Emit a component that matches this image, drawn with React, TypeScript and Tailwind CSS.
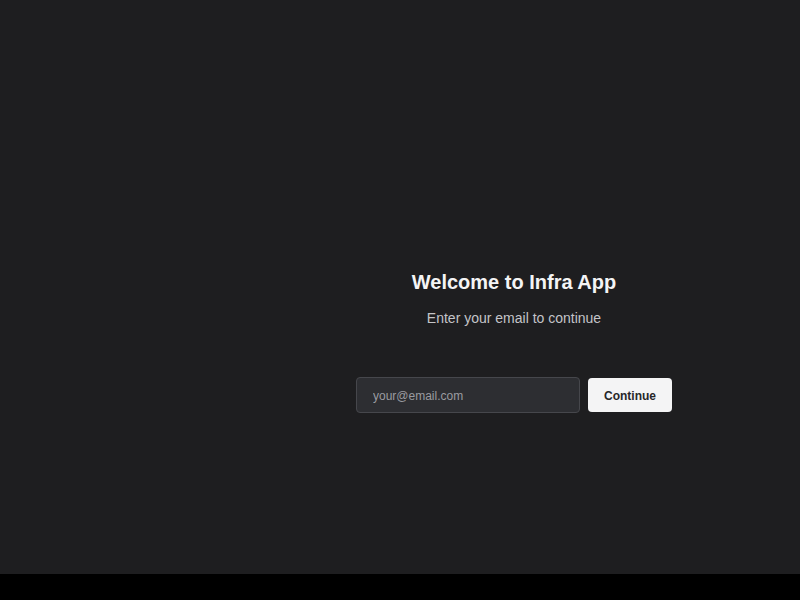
export default function App() {
  return (
    <div className="flex h-[600px] w-[800px] flex-col bg-black font-['Liberation_Sans',Arial,sans-serif]">
      <div className="flex h-[574px] bg-[#1e1e20]">
        <aside className="w-[228px] shrink-0" />
        <main className="flex flex-1 flex-col items-center pt-[270px]">
          <h1 className="text-[20px] leading-6 font-bold text-[#f4f4f5]">Welcome to Infra App</h1>
          <p className="mt-[14px] text-[14px] leading-5 text-[#c4c4c8]">Enter your email to continue</p>
          <form className="mt-[49px] flex items-center gap-2" onSubmit={(e) => e.preventDefault()}>
            <input
              type="email"
              placeholder="your@email.com"
              className="h-9 w-[224px] rounded border border-[#46474c] bg-[#2d2e32] px-4 pt-px text-[12px] text-[#e4e4e7] placeholder:text-[#9a9ba0] outline-none"
            />
            <button
              type="submit"
              className="h-[34px] w-[84px] rounded bg-[#f4f4f5] pt-px text-[12px] font-bold text-[#27272a]"
            >
              Continue
            </button>
          </form>
        </main>
      </div>
    </div>
  );
}
